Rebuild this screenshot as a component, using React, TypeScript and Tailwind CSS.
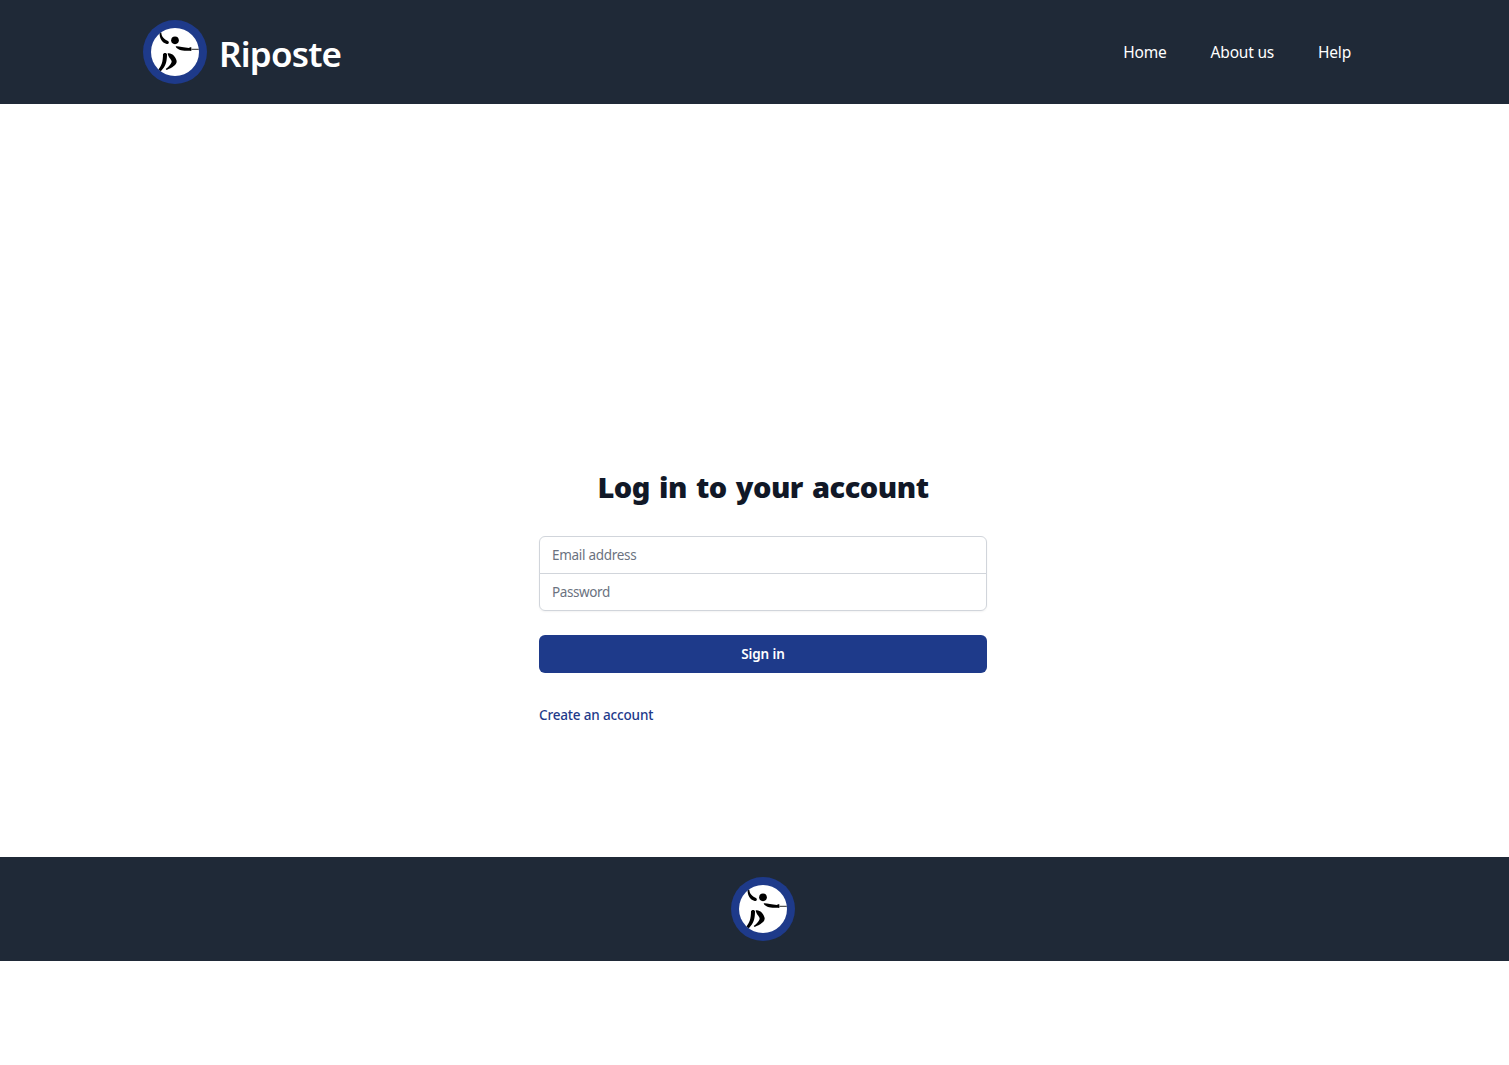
function Logo() {
  return (
    <svg viewBox="9 12 192 192" className="h-16 w-16 shrink-0" role="img" aria-label="Riposte logo">
      <defs>
        <clipPath id="disc">
          <circle cx="105" cy="108" r="72" />
        </clipPath>
        <filter id="soft" x="-10%" y="-10%" width="120%" height="120%">
          <feGaussianBlur stdDeviation="2" />
        </filter>
      </defs>
      <circle cx="105" cy="108" r="96" fill="#1e3a8a" />
      <circle cx="105" cy="108" r="72" fill="#fff" />
      <g clipPath="url(#disc)">
        <g fill="#050505" filter="url(#soft)">
          <circle cx="105" cy="73" r="11.5" />
          <path d="M59 46 L64 50 C64 61 72 69 84 75 C89 79 86 85 80 84 C66 81 57 66 59 46Z" />
          <path d="M107 91 C116 90 130 95 147 96 L150 94 L154 94 L154 105 L149 104 C132 106 110 103 107 91Z" />
          <path d="M154 100 H178" stroke="#444" strokeWidth="3.5" />
          <path d="M69 115 C72 109 79 110 81 115 C81 131 79 148 68 159 L60 169 L53 164 C65 150 69 137 69 115Z" />
          <path d="M83 112 C94 109 107 121 110 135 C111 147 96 155 80 162 L77 159 C85 153 94 143 95 137 C94 129 84 124 83 112Z" />
        </g>
      </g>
    </svg>
  );
}

export default function App() {
  return (
    <div className="flex min-h-screen flex-col bg-white font-['Noto_Sans','Open_Sans',sans-serif]">
      <header className="flex h-[104px] items-center justify-between bg-[#1f2937] pr-[158px] pl-[143px] text-white">
        <a href="#" className="flex items-center">
          <Logo />
          <span className="mt-1 ml-3 text-[35px] leading-10 font-semibold tracking-[-0.8px]">Riposte</span>
        </a>
        <nav className="flex gap-11 text-[15.5px] leading-6 tracking-[-0.2px]">
          <a href="#">Home</a>
          <a href="#">About us</a>
          <a href="#">Help</a>
        </nav>
      </header>

      <main className="flex h-[753px] flex-col items-center pt-[365px] pl-[17px]">
        <div className="w-[448px]">
          <h2 className="text-center text-[29px] leading-9 font-black tracking-[-0.5px] whitespace-nowrap text-[#111827] [word-spacing:2px]">
            Log in to your account
          </h2>
          <form className="mt-[31px]" onSubmit={(e) => e.preventDefault()}>
            <div className="-space-y-px rounded-md shadow-[0_1px_2px_rgba(0,0,0,0.05)]">
              <input
                type="email"
                placeholder="Email address"
                className="block h-[38px] w-full rounded-t-md border border-[#d1d5db] px-3 text-[13.5px] tracking-[-0.3px] placeholder:text-[#6b7280]"
              />
              <input
                type="password"
                placeholder="Password"
                className="block h-[38px] w-full rounded-b-md border border-[#d1d5db] px-3 text-[13.5px] tracking-[-0.4px] placeholder:text-[#6b7280]"
              />
            </div>
            <button className="mt-6 block h-[38px] w-full rounded-md bg-[#1e3a8a] text-[13.5px] font-semibold tracking-[-0.1px] text-white">
              Sign in
            </button>
            <a href="#" className="mt-8 inline-block text-[13.5px] leading-5 font-medium tracking-[-0.16px] text-[#1e3a8a]">
              Create an account
            </a>
          </form>
        </div>
      </main>

      <footer className="flex h-[104px] items-center justify-center bg-[#1f2937] pl-[17px]">
        <Logo />
      </footer>
    </div>
  );
}
